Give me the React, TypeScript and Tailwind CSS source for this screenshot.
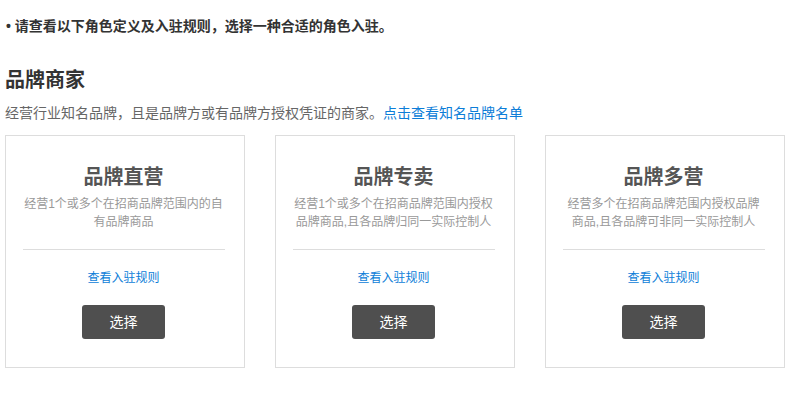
const roles = [
  {
    title: '品牌直营',
    desc: '经营1个或多个在招商品牌范围内的自有品牌商品',
  },
  {
    title: '品牌专卖',
    desc: '经营1个或多个在招商品牌范围内授权品牌商品,且各品牌归同一实际控制人',
  },
  {
    title: '品牌多营',
    desc: '经营多个在招商品牌范围内授权品牌商品,且各品牌可非同一实际控制人',
  },
];

function RoleCard({ title, desc }: { title: string; desc: string }) {
  return (
    <div className="w-[240px] border border-[#dddddd] bg-white pt-[27px] pb-[28px] pl-4 pr-[19px] flex flex-col items-center">
      <h3 className="text-[20px] leading-[28px] font-bold text-[#555555]">{title}</h3>
      <p className="mt-1 w-[202px] text-center text-[12px] leading-[18px] h-[36px] text-[#999999]">{desc}</p>
      <div className="mt-[18px] h-px w-[202px] bg-[#dddddd]" />
      <a href="#" className="mt-[19px] text-[12px] leading-[18px] text-[#0c7dd8]">
        查看入驻规则
      </a>
      <button className="mt-[18px] w-[83px] h-[34px] rounded-[3px] bg-[#4f4f4f] text-white text-[14px]">
        选择
      </button>
    </div>
  );
}

export default function App() {
  return (
    <div
      className="w-[803px] h-[402px] bg-white pl-[5px] pt-4"
      style={{ fontFamily: '"Liberation Sans", "Noto Sans CJK SC", sans-serif' }}
    >
      {/* Notice */}
      <p className="text-[14px] leading-[20px] font-bold text-[#333333] pl-px">
        • 请查看以下角色定义及入驻规则，选择一种合适的角色入驻。
      </p>

      {/* Section */}
      <h2 className="mt-[30px] text-[20px] leading-[28px] font-bold text-[#333333]">品牌商家</h2>
      <p className="mt-[9px] text-[14px] leading-[20px] text-[#666666]">
        经营行业知名品牌，且是品牌方或有品牌方授权凭证的商家。
        <a href="#" className="text-[#0c7dd8]">
          点击查看知名品牌名单
        </a>
      </p>

      <div className="mt-3 flex gap-[30px]">
        {roles.map((r) => (
          <RoleCard key={r.title} title={r.title} desc={r.desc} />
        ))}
      </div>
    </div>
  );
}
